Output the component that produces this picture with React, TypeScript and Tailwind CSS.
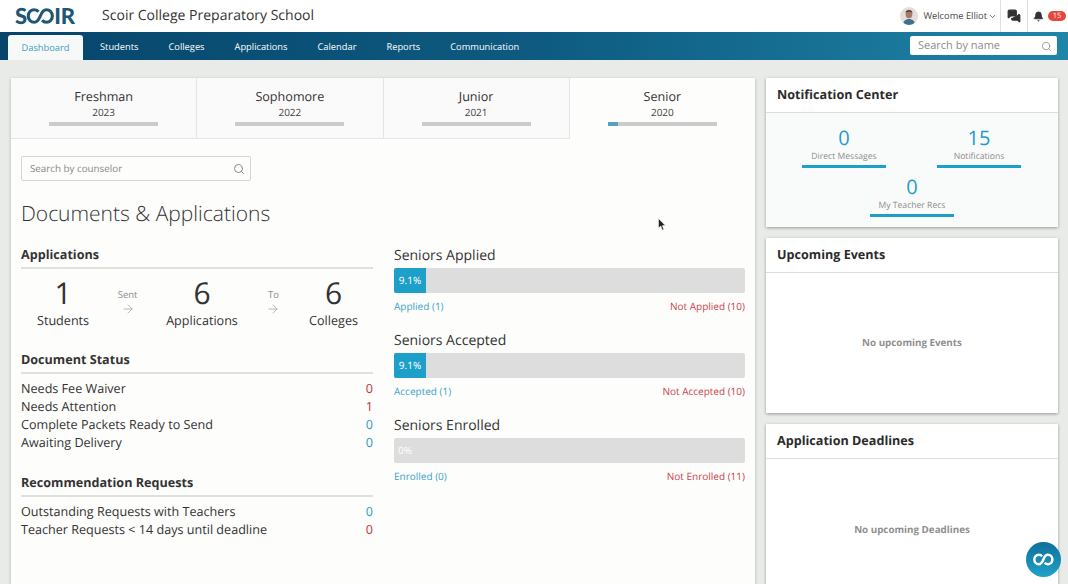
import { ChevronDown, MessagesSquare, Bell, Search, ArrowRight } from "lucide-react";

const navItems = ["Students", "Colleges", "Applications", "Calendar", "Reports", "Communication"];

const years = [
  { name: "Freshman", year: "2023", fill: false },
  { name: "Sophomore", year: "2022", fill: false },
  { name: "Junior", year: "2021", fill: false },
  { name: "Senior", year: "2020", fill: true },
];

const docStatus = [
  { label: "Needs Fee Waiver", value: 0, red: true },
  { label: "Needs Attention", value: 1, red: true },
  { label: "Complete Packets Ready to Send", value: 0, red: false },
  { label: "Awaiting Delivery", value: 0, red: false },
];

const recRequests = [
  { label: "Outstanding Requests with Teachers", value: 0, red: false },
  { label: "Teacher Requests < 14 days until deadline", value: 0, red: true },
];

const bars = [
  { title: "Seniors Applied", pct: "9.1%", yes: "Applied (1)", no: "Not Applied (10)", filled: true },
  { title: "Seniors Accepted", pct: "9.1%", yes: "Accepted (1)", no: "Not Accepted (10)", filled: true },
  { title: "Seniors Enrolled", pct: "0%", yes: "Enrolled (0)", no: "Not Enrolled (11)", filled: false },
];

function Logo() {
  return (
    <div className="flex items-center font-['Lato',sans-serif] text-[22px] leading-none font-black text-[#1f5673]">
      <span>S</span>
      <svg width="29" height="18" viewBox="0 0 30 18" fill="none" className="-mx-[1px]">
        <path
          d="M13 4.600C11.800 3.200 10.200 2.500 8.500 2.500 5 2.500 2.300 5.400 2.300 9s2.700 6.500 6.200 6.500c2.600 0 4.400-1.700 6.300-6.500 1.900-4.800 3.700-6.500 6.300-6.500 3.500 0 6.200 2.900 6.200 6.500s-2.700 6.500-6.200 6.500c-1.700 0-3.300-.7-4.500-2.100"
          stroke="#1f5673"
          strokeWidth="3.200"
        />
      </svg>
      <span>IR</span>
    </div>
  );
}

function Avatar() {
  return (
    <svg width="18" height="18" viewBox="0 0 18 18" className="rounded-full">
      <rect width="18" height="18" fill="#e3dfd8" />
      <ellipse cx="9" cy="7" rx="3.400" ry="4.200" fill="#a9786a" />
      <path d="M5.500 5.500C6 2.500 12 2.500 12.500 5.500 11 4.500 7 4.500 5.500 5.500Z" fill="#4a3d38" />
      <path d="M3 18c0-4 3-6 6-6s6 2 6 6Z" fill="#3f6f8a" />
    </svg>
  );
}

function SectionTitle({ children }: { children: string }) {
  return (
    <h3 className="text-[12.6px] leading-[20px] font-bold text-[#333] pt-[1px] pb-[2px] border-b-2 border-[#dfe1df]">{children}</h3>
  );
}

function StatRow({ label, value, red }: { label: string; value: number; red: boolean }) {
  return (
    <div className="flex justify-between text-[12.6px] leading-[18px] text-[#333]">
      <span>{label}</span>
      <span className={red ? "text-[#c2303c]" : "text-[#1d9dc6]"}>{value}</span>
    </div>
  );
}

function Stat({ num, label }: { num: string; label: string }) {
  return (
    <div className="flex flex-col items-center text-[#333]">
      <span className="text-[30px] leading-[36px] -mt-[1px]">{num}</span>
      <span className="text-[12.6px] leading-[18px] mt-[1px]">{label}</span>
    </div>
  );
}

function Flow({ label }: { label: string }) {
  return (
    <div className="flex flex-col items-center text-[#8a8a8a] -mt-[3px]">
      <span className="text-[9.5px] leading-[14px]">{label}</span>
      <ArrowRight size={14} strokeWidth={1} />
    </div>
  );
}

function Notif({ num, label }: { num: string; label: string }) {
  return (
    <div className="flex flex-col items-center w-[84px]">
      <span className="text-[20px] leading-[26px] text-[#1d9dc6]">{num}</span>
      <span className="text-[8.6px] leading-[12px] text-[#8d8d8d] -mt-[1px]">{label}</span>
      <div className="h-[3px] w-full bg-[#1d9fca] mt-[3px]" />
    </div>
  );
}

function Card({ title, children, className }: { title: string; children: React.ReactNode; className: string }) {
  return (
    <section className={`bg-white shadow-[0_1px_3px_rgba(0,0,0,0.35)] flex flex-col ${className}`}>
      <h2 className="h-[35px] shrink-0 px-[11px] flex items-center text-[12.6px] font-bold text-[#2b2b2b] border-b border-[#dcdede]">
        {title}
      </h2>
      {children}
    </section>
  );
}

export default function App() {
  return (
    <div className="h-[584px] w-[1068px] overflow-hidden bg-[#e9ebe9] relative font-['Open_Sans',sans-serif] text-[#333] [text-rendering:geometricPrecision]">
      <header className="h-[32px] bg-white flex items-center pl-[15px]">
        <Logo />
        <h1 className="ml-[27px] text-[14px] text-[#333] leading-none -mt-[1px]">Scoir College Preparatory School</h1>
        <div className="ml-auto flex items-center h-full">
          <Avatar />
          <span className="ml-[5px] text-[9.3px] text-[#444]">Welcome Elliot</span>
          <ChevronDown size={9} className="ml-[1px] text-[#444]" />
          <div className="ml-[3px] h-full w-[28px] border-x border-[#e0e0e0] flex items-center justify-center">
            <MessagesSquare size={14} fill="#333" stroke="#333" />
          </div>
          <div className="w-[40px] pl-[5px] flex items-center gap-[4px]">
            <Bell size={11} fill="#333" stroke="#333" />
            <span className="h-[10px] w-[18px] rounded-full bg-[#e8453c] text-white text-[7.5px] leading-[10px] text-center">15</span>
          </div>
        </div>
      </header>

      <nav className="h-[28px] bg-gradient-to-r from-[#07456b] via-[#0e5a80] to-[#1f86a8] flex items-end pl-[8px]">
        <div className="h-[25px] w-[75px] bg-[#f7f8f8] rounded-t-[3px] text-[9.3px] text-[#3ba3c6] flex items-center justify-center">
          Dashboard
        </div>
        <div className="flex h-full items-center ml-[17px] gap-[30px] text-[9.3px] text-white pt-[2px]">
          {navItems.map((n) => (
            <span key={n}>{n}</span>
          ))}
        </div>
        <div className="ml-auto mr-[11px] mb-[5px] h-[19px] w-[147px] bg-white rounded-[2px] flex items-center px-[8px] pt-[1px]">
          <span className="text-[11px] text-[#8c8c8c]">Search by name</span>
          <Search size={11} className="ml-auto -mr-[3px] text-[#999]" />
        </div>
      </nav>

      <main className="flex items-start gap-[11px] pl-[11px] pt-[18px]">
        <div className="w-[744px] h-[520px] shrink-0 bg-[#fdfdfc] shadow-[0_1px_3px_rgba(0,0,0,0.25)]">
          <div className="flex h-[61px]">
            {years.map((y) => (
              <div
                key={y.name}
                className={`flex flex-col items-center flex-1 pt-[10px] ${
                  y.fill ? "bg-[#fdfdfc]" : "bg-[#fafafa] border-b border-r border-[#e4e5e5]"
                }`}
              >
                <span className="text-[12.6px] leading-[17px] text-[#333]">{y.name}</span>
                <span className="text-[10px] leading-[14px] text-[#444]">{y.year}</span>
                <div className="h-[4px] w-[109px] bg-[#cbcbcb] mt-[3px]">
                  {y.fill && <div className="h-full w-[10px] bg-[#5a9fc0]" />}
                </div>
              </div>
            ))}
          </div>

          <div className="px-[10px]">
            <div className="mt-[17px] h-[25px] w-[230px] border border-[#d4d6d6] rounded-[2px] flex items-center px-[8px] pt-[1px]">
              <span className="text-[9.8px] text-[#888]">Search by counselor</span>
              <Search size={12} className="ml-auto -mr-[3px] text-[#888]" />
            </div>
            <h2 className="mt-[18px] text-[21px] leading-[30px] font-light text-[#333]">Documents &amp; Applications</h2>

            <div className="mt-[14px] flex gap-[21px]">
              <div className="w-[352px] shrink-0">
                <div className="pt-[1px]">
                  <SectionTitle>Applications</SectionTitle>
                </div>
                <div className="flex justify-between items-center pl-[16px] pr-[15px] mt-[7px]">
                  <Stat num="1" label="Students" />
                  <Flow label="Sent" />
                  <Stat num="6" label="Applications" />
                  <Flow label="To" />
                  <Stat num="6" label="Colleges" />
                </div>
                <div className="mt-[19px]">
                  <SectionTitle>Document Status</SectionTitle>
                </div>
                <div className="mt-[6px]">
                  {docStatus.map((d) => (
                    <StatRow key={d.label} {...d} />
                  ))}
                </div>
                <div className="mt-[20px]">
                  <SectionTitle>Recommendation Requests</SectionTitle>
                </div>
                <div className="mt-[6px]">
                  {recRequests.map((d) => (
                    <StatRow key={d.label} {...d} />
                  ))}
                </div>
              </div>

              <div className="flex-1 flex flex-col gap-[17px] pt-[3px]">
                {bars.map((b) => (
                  <div key={b.title}>
                    <h3 className="text-[14px] leading-[20px] text-[#333]">{b.title}</h3>
                    <div className="mt-[2px] h-[25px] bg-[#dcdddc] rounded-[2px] overflow-hidden flex">
                      {b.filled ? (
                        <div className="w-[32px] bg-[#1d9fca] text-white text-[10px] flex items-center justify-center">{b.pct}</div>
                      ) : (
                        <span className="pl-[4px] text-white text-[10px] leading-[25px]">{b.pct}</span>
                      )}
                    </div>
                    <div className="mt-[7px] flex justify-between text-[10px] leading-[14px] -translate-y-[1px]">
                      <span className="text-[#3ba3c6]">{b.yes}</span>
                      <span className="text-[#c8434d]">{b.no}</span>
                    </div>
                  </div>
                ))}
              </div>
            </div>
          </div>
        </div>

        <aside className="w-[292px] shrink-0 flex flex-col gap-[11px]">
          <Card title="Notification Center" className="h-[149px]">
            <div className="flex-1 bg-[#f9fafa] flex flex-col items-center pt-[12px]">
              <div className="flex w-full justify-between pl-[36px] pr-[37px]">
                <Notif num="0" label="Direct Messages" />
                <Notif num="15" label="Notifications" />
              </div>
              <div className="mt-[6px]">
                <Notif num="0" label="My Teacher Recs" />
              </div>
            </div>
          </Card>
          <Card title="Upcoming Events" className="h-[175px]">
            <div className="flex-1 flex items-center justify-center text-[9.8px] font-bold text-[#8f8f8f]">No upcoming Events</div>
          </Card>
          <Card title="Application Deadlines" className="h-[177px]">
            <div className="flex-1 flex items-center justify-center text-[9.8px] font-bold text-[#8f8f8f]">No upcoming Deadlines</div>
          </Card>
        </aside>
      </main>

      {/* chat launcher */}
      <div className="absolute left-[1026px] top-[542px] w-[35px] h-[35px] rounded-full bg-gradient-to-b from-[#0f6f9c] to-[#1fa3c9] flex items-center justify-center">
        <svg width="25" height="13" viewBox="0 0 30 18" fill="none">
          <path
            d="M13 4.600C11.800 3.200 10.200 2.500 8.500 2.500 5 2.500 2.300 5.400 2.300 9s2.700 6.500 6.200 6.500c2.600 0 4.400-1.700 6.300-6.500 1.900-4.800 3.700-6.500 6.300-6.500 3.500 0 6.200 2.900 6.200 6.500s-2.700 6.500-6.200 6.500c-1.700 0-3.300-.7-4.500-2.100"
            stroke="white"
            strokeWidth="3.400"
          />
        </svg>
      </div>

      {/* mouse pointer */}
      <svg className="absolute left-[658px] top-[218px]" width="8" height="13" viewBox="0 0 8 13">
        <path d="M0.500 0.500V10L2.800 8 4.300 12 5.800 11.400 4.300 7.600H7.300Z" fill="#222" stroke="#fff" strokeWidth="0.500" />
      </svg>
    </div>
  );
}
